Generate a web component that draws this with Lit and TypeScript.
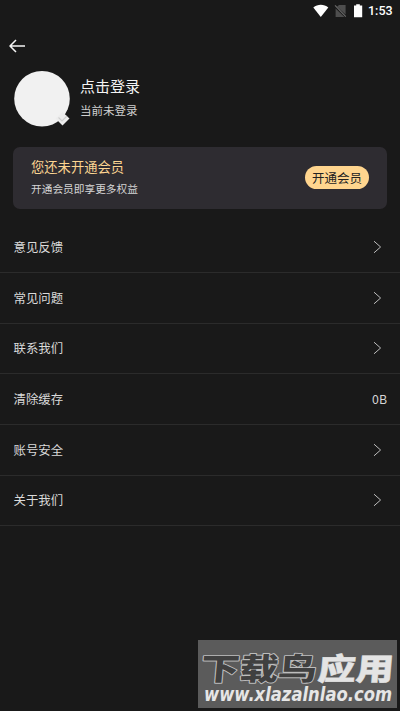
import { LitElement, html, css, svg } from "lit";
import { customElement, property } from "lit/decorators.js";

interface Row { label: string; value?: string }

const ROWS: Row[] = [
  { label: "意见反馈" },
  { label: "常见问题" },
  { label: "联系我们" },
  { label: "清除缓存", value: "0B" },
  { label: "账号安全" },
  { label: "关于我们" },
];

@customElement("status-bar")
class StatusBar extends LitElement {
  static styles = css`
    :host { display: flex; height: 22px; padding-right: 7px; align-items: center; justify-content: flex-end; color: #fff; }
    svg { display: block; }
    .time { font: 500 12.5px/22px Roboto, sans-serif; width: 25px; white-space: nowrap; }
  `;
  render() {
    return html`
      <svg width="55" height="22" viewBox="0 0 55 22">
        <path d="M0.3 7.4C4.6 3.8 11 3.8 15.3 7.4L7.8 17Z" fill="#fff" />
        <path d="M26 5H32.6V14.6L24 6.8ZM22.6 8.4L31.4 17H22.6Z" fill="#4e4e4e" />
        <path d="M22 5.4L32.8 16.6" stroke="#6c6c6c" stroke-width="1.1" />
        <path d="M41 5.6H43.2V4.3H46.8V5.6H49.2V17.2H41Z" fill="#fff" />
      </svg>
      <span class="time">1:53</span>
    `;
  }
}

@customElement("menu-row")
class MenuRow extends LitElement {
  @property() label = "";
  @property() value = "";
  static styles = css`
    :host { display: flex; box-sizing: border-box; height: 50.65px; padding: 0 13px 0 13.5px; align-items: center; justify-content: space-between; border-bottom: 1px solid #2b2b2b; color: #dadada; font-size: 12.4px; line-height: 18px; }
    svg { display: block; margin-right: 5px; }
    .value { font-size: 12.3px; color: #d5d5d5; }
  `;
  render() {
    return html`
      <span>${this.label}</span>
      ${this.value
        ? html`<span class="value">${this.value}</span>`
        : html`<svg width="9" height="14" viewBox="0 0 9 14"><path d="M1 1.2L7.6 7L1 12.8" fill="none" stroke="#bdbdbd" stroke-width="1" /></svg>`}
    `;
  }
}

@customElement("site-mark")
class SiteMark extends LitElement {
  static styles = css`
    :host { display: block; width: 199px; height: 68px; background: #5b5b5b; }
    svg { display: block; }
    .big { font-family: "Noto Sans CJK SC", sans-serif; font-weight: 900; font-size: 34px; }
    .dark { fill: #404040; stroke: #bdbdbd; stroke-width: 2px; paint-order: stroke; stroke-linejoin: round; }
    .light { fill: #e4e4e4; stroke: #e4e4e4; stroke-width: 0.5px; }
    .url { font-family: "DejaVu Sans", sans-serif; font-weight: 700; font-style: italic; font-size: 16.5px; fill: #e6e6e6; }
  `;
  render() {
    return html`<svg width="199" height="68" viewBox="0 0 199 68">
      ${svg`
        <g transform="translate(0 39.5) skewX(-5) scale(1 0.9)">
          <text class="big dark" x="2" y="0" textLength="116" lengthAdjust="spacingAndGlyphs">下载鸟</text>
          <text class="big light" x="119" y="0" textLength="76" lengthAdjust="spacingAndGlyphs">应用</text>
        </g>
        <text class="url" transform="translate(6 61.3) scale(1 1.13)" x="0" y="0" textLength="188" lengthAdjust="spacingAndGlyphs">www.xlazalnlao.com</text>
      `}
    </svg>`;
  }
}

@customElement("app-root")
class AppRoot extends LitElement {
  static styles = css`
    :host { display: block; position: relative; box-sizing: border-box; width: 400px; height: 711px; overflow: hidden; background: #191919; font-family: "Noto Sans CJK SC", sans-serif; }
    .nav { height: 48px; padding: 17px 0 0 9px; box-sizing: border-box; }
    .nav svg, .avatar { display: block; }
    .profile { display: flex; height: 77px; padding-left: 13px; box-sizing: border-box; }
    .who { padding: 5px 0 0 9px; }
    .name { color: #f4f4f4; font-size: 15px; line-height: 22px; }
    .state { color: #d0d0d0; font-size: 11.5px; line-height: 18px; margin-top: 4px; }
    .card { display: flex; align-items: center; justify-content: space-between; box-sizing: border-box; width: 374px; height: 62px; margin-left: 13px; padding: 0 18px; border-radius: 7px; background: #2e2c31; }
    .words { padding-bottom: 2px; }
    .title { color: #fcd591; font-size: 13.3px; line-height: 20px; }
    .sub { color: #d5d5d5; font-size: 10.7px; line-height: 16px; margin-top: 4px; }
    .open { width: 64px; height: 23px; margin-bottom: 1px; border-radius: 12px; background: #ffd58e; color: #222; font-size: 12.5px; line-height: 23px; text-align: center; }
    .list { padding-top: 13.3px; }
    site-mark { position: absolute; left: 198px; top: 640px; }
  `;
  render() {
    return html`
      <status-bar></status-bar>
      <div class="nav">
        <svg width="18" height="14" viewBox="0 0 18 14"><path d="M7 1L1 7L7 13M1 7H16" fill="none" stroke="#f5f5f5" stroke-width="1.5" stroke-linejoin="round" /></svg>
      </div>
      <div class="profile">
        <svg class="avatar" width="58" height="58" viewBox="0 0 58 58">
          <circle cx="29" cy="28.7" r="27.8" fill="#f1f1f1" />
          <path d="M49.5 42L56.5 48.5L49.5 55.5L42.5 48.5Z" fill="#ededed" />
          <path d="M45.5 47.5L49 51L54 46" fill="none" stroke="#cfcfcf" stroke-width="1.1" />
        </svg>
        <div class="who">
          <div class="name">点击登录</div>
          <div class="state">当前未登录</div>
        </div>
      </div>
      <div class="card">
        <div class="words">
          <div class="title">您还未开通会员</div>
          <div class="sub">开通会员即享更多权益</div>
        </div>
        <div class="open">开通会员</div>
      </div>
      <div class="list">
        ${ROWS.map((r) => html`<menu-row .label=${r.label} .value=${r.value ?? ""}></menu-row>`)}
      </div>
      <site-mark></site-mark>
    `;
  }
}
